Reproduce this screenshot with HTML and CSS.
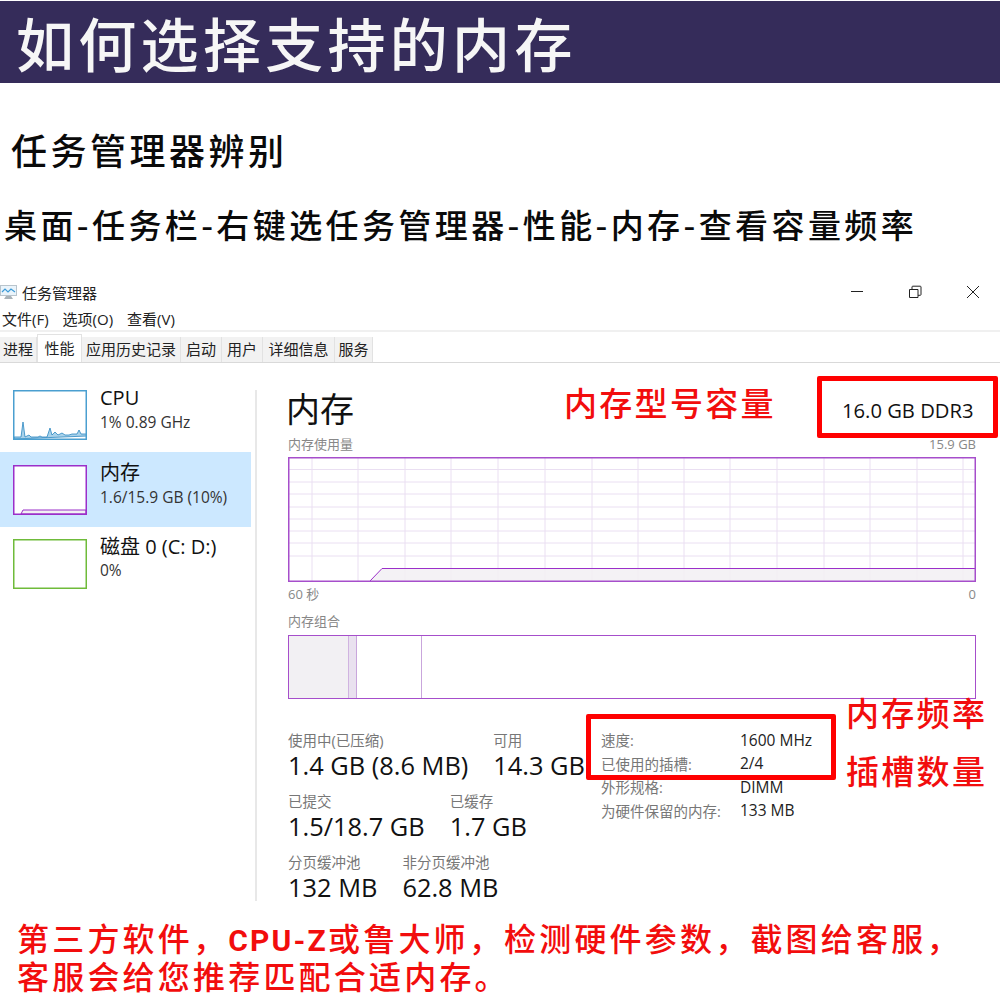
FILE: index.html
```html
<!DOCTYPE html>
<html lang="zh-CN">
<head>
<meta charset="utf-8">
<title>如何选择支持的内存</title>
<link rel="stylesheet" href="styles.css">
</head>
<body>
<div class="page">
  <h1 class="banner">如何选择支持的内存</h1>
  <h2 class="subhead">任务管理器辨别</h2>
  <p class="path">桌面-任务栏-右键选任务管理器-性能-内存-查看容量频率</p>

  <section class="win">
    <div class="titlebar">
      <svg class="appicon" width="18" height="18" viewBox="0 0 18 18"><rect x="0.5" y="2.5" width="16" height="10" fill="#eaf4fb" stroke="#b9c4cc"/><path d="M2 9l3-3 3 3 3-3 4 3" fill="none" stroke="#3d9bd8" stroke-width="1.2"/><path d="M6 13h5l2 3H4z" fill="#a9b2b8"/></svg>
      <span class="wintitle">任务管理器</span>
      <div class="controls">
        <svg width="14" height="14" viewBox="0 0 14 14"><path d="M1 6.5h12" stroke="#222" fill="none"/></svg>
        <svg width="14" height="14" viewBox="0 0 14 14"><path d="M1.5 4.5h8.500v8h-8.500z M4 4.500V2a.8.8 0 0 1 .8-.8h7.400a.8.800 0 0 1 .8.800v7.500a.8.800 0 0 1-.8.800H10" stroke="#222" fill="none"/></svg>
        <svg width="14" height="14" viewBox="0 0 14 14"><path d="M1 1l12 12M13 1L1 13" stroke="#222" fill="none"/></svg>
      </div>
    </div>
    <nav class="menu"><span>文件(F)</span><span>选项(O)</span><span>查看(V)</span></nav>
    <div class="tabs">
      <span class="tab t1">进程</span>
      <span class="tab active t2">性能</span>
      <span class="tab t3">应用历史记录</span>
      <span class="tab t4">启动</span>
      <span class="tab t4">用户</span>
      <span class="tab t5">详细信息</span>
      <span class="tab t6">服务</span>
    </div>
    <div class="body">
      <aside class="side">
        <div class="item first">
          <svg class="thumb" width="74" height="50" viewBox="0 0 74 50"><path d="M1 49V47h7l2-15 2 15 4-2 2 2h4l3 0 2-1 2 1h5l3-9 2 7 3-3 3 3 4-2 3 2h4l3-1h5l2-4 2 4h6v2z" fill="#a9d2ea" stroke="#2b86c0" stroke-width="0.8"/><rect x="0.750" y="0.750" width="72.500" height="48.500" fill="none" stroke="#4a9fd0" stroke-width="1.500"/></svg>
          <div class="itemtext"><div class="itemname">CPU</div><div class="itemsub">1% 0.89 GHz</div></div>
        </div>
        <div class="item selected">
          <svg class="thumb" width="74" height="50" viewBox="0 0 74 50"><rect width="74" height="50" fill="#fff"/><path d="M8 49l2-4h63v4z" fill="#f2f0f3" stroke="#9b2fc9"/><rect x="0.750" y="0.750" width="72.500" height="48.500" fill="none" stroke="#9b2fc9" stroke-width="1.500"/></svg>
          <div class="itemtext"><div class="itemname">内存</div><div class="itemsub">1.6/15.9 GB (10%)</div></div>
        </div>
        <div class="item disk">
          <svg class="thumb" width="74" height="50" viewBox="0 0 74 50"><rect x="0.750" y="0.750" width="72.500" height="48.500" fill="#fff" stroke="#6fbb3a" stroke-width="1.500"/></svg>
          <div class="itemtext"><div class="itemname">磁盘 0 (C: D:)</div><div class="itemsub">0%</div></div>
        </div>
      </aside>
      <main class="main">
        <div class="heading">内存</div>
        <div class="caprow usage"><span>内存使用量</span><span>15.9 GB</span></div>
        <svg class="graph" width="688" height="125" viewBox="0 0 688 125">
          <path d="M24 0V125M70 0V125M117 0V125M163 0V125M210 0V125M257 0V125M304 0V125M350 0V125M396 0V125M442 0V125M489 0V125M536 0V125M582 0V125M629 0V125M675 0V125M0 12.500H688M0 25H688M0 37H688M0 50H688M0 62H688M0 74H688M0 86H688M0 99H688" stroke="#eadff2" fill="none"/>
          <path d="M82 124L94 111.500H687V124z" fill="#f2f0f3" fill-opacity="0.85"/>
          <path d="M82 124L94 111.500H687" stroke="#9b2fc9" fill="none"/>
          <rect x="0.750" y="0.750" width="686.500" height="123.500" fill="none" stroke="#a64ecb" stroke-width="1.500"/>
        </svg>
        <div class="caprow axis"><span>60 秒</span><span>0</span></div>
        <div class="caprow combo">内存组合</div>
        <div class="bar"><i class="seg s1"></i><i class="seg s2"></i><i class="seg s3"></i></div>
        <div class="lower">
          <div class="stats">
            <div class="statrow">
              <div class="stat"><label>使用中(已压缩)</label><b>1.4 GB (8.6 MB)</b></div>
              <div class="stat"><label>可用</label><b>14.3 GB</b></div>
            </div>
            <div class="statrow">
              <div class="stat"><label>已提交</label><b>1.5/18.7 GB</b></div>
              <div class="stat"><label>已缓存</label><b>1.7 GB</b></div>
            </div>
            <div class="statrow">
              <div class="stat"><label>分页缓冲池</label><b>132 MB</b></div>
              <div class="stat"><label>非分页缓冲池</label><b>62.8 MB</b></div>
            </div>
          </div>
          <dl class="specs">
            <dt>速度:</dt><dd>1600 MHz</dd>
            <dt>已使用的插槽:</dt><dd>2/4</dd>
            <dt>外形规格:</dt><dd>DIMM</dd>
            <dt>为硬件保留的内存:</dt><dd>133 MB</dd>
          </dl>
        </div>
      </main>
    </div>
  </section>

  <p class="note">第三方软件，<span class="latin">CPU-Z</span>或鲁大师，检测硬件参数，截图给客服，<br>客服会给您推荐匹配合适内存。</p>

  <div class="redbox box-a"><span class="ddr">16.0 GB DDR3</span></div>
  <div class="redbox box-b"></div>
  <div class="mark mark-a">内存型号容量</div>
  <div class="mark mark-b">内存频率</div>
  <div class="mark mark-c">插槽数量</div>
</div>
</body>
</html>
```
FILE: styles.css
```css
* { box-sizing: border-box; }
html, body { margin: 0; padding: 0; background: #fff; }
.page {
  position: relative;
  width: 1000px;
  height: 1000px;
  overflow: hidden;
  font-family: "Open Sans", "Noto Sans CJK SC", sans-serif;
  color: #111;
}
.banner {
  margin: 1px 0 0;
  height: 82px;
  padding-left: 16px;
  background: #352c5a;
  color: #f6f6f6;
  font: 500 58px/82px "Noto Sans CJK SC", sans-serif;
  letter-spacing: 4.300px;
}
.subhead {
  margin: 43px 0 0 11px;
  height: 46px;
  font: 500 36px/46px "Noto Sans CJK SC", sans-serif;
  letter-spacing: 3.500px;
  color: #0a0a0a;
}
.path {
  margin: 30px 0 0 4px;
  height: 44px;
  font: 500 33px/44px "Noto Sans CJK SC", sans-serif;
  letter-spacing: 3.400px;
  color: #0a0a0a;
  white-space: nowrap;
}
.win { margin-top: 33px; }
.titlebar {
  display: flex;
  align-items: center;
  height: 26px;
}
.wintitle {
  margin-left: 4px;
  font-size: 15px;
  color: #222;
}
.controls {
  margin-left: auto;
  margin-right: 20px;
  display: flex;
  gap: 44px;
}
.menu {
  display: flex;
  align-items: center;
  gap: 14px;
  height: 26px;
  margin-top: 1px;
  padding-left: 2px;
  border-bottom: 2px solid #f0f0f0;
  font-size: 15px;
  color: #222;
}
.tabs {
  display: flex;
  align-items: flex-end;
  height: 31px;
  border-bottom: 1px solid #d9d9d9;
  font-size: 15px;
  color: #222;
}
.tab {
  display: block;
  height: 25px;
  line-height: 25px;
  text-align: center;
  background: #f2f2f2;
  border-right: 1px solid #e2e2e2;
}
.tab.active { height: 28px; line-height: 26px; background: #fff; border: 1px solid #e2e2e2; border-bottom: 0; }
.t1 { width: 37px; }
.t2 { width: 45px; }
.t3 { width: 99px; }
.t4 { width: 41px; }
.t5 { width: 72px; }
.t6 { width: 38px; }
.body { display: flex; height: 540px; }
.side {
  width: 257px;
  flex: none;
  height: 511px;
  margin-top: 27px;
  border-right: 2px solid #e8e8e8;
  padding-right: 4px;
}
.item {
  display: flex;
  gap: 13px;
  padding-left: 13px;
  align-items: flex-start;
}
.first { height: 62px; }
.selected { height: 75px; background: #cce8ff; padding-top: 13px; }
.disk { height: 75px; padding-top: 12px; }
.thumb { flex: none; }
.itemtext { margin-top: -5px; white-space: nowrap; }
.itemname { font-size: 20px; line-height: 25px; color: #111; }
.itemsub { font-size: 15.500px; line-height: 24px; color: #333; }
.disk .itemsub { line-height: 22px; }
.main { flex: 1; padding-left: 31px; padding-right: 24px; }
.heading {
  margin: 26px 0 0 -2px;
  height: 40px;
  font-size: 34px;
  line-height: 40px;
  color: #111;
}
.caprow {
  display: flex;
  justify-content: space-between;
  height: 18px;
  margin-top: 6px;
  font-size: 13px;
  line-height: 18px;
  color: #888;
}
.usage { margin-bottom: 4px; }
.graph { display: block; }
.axis { margin-top: 3px; }
.combo { margin-top: 9px; margin-bottom: 5px; }
.bar {
  display: flex;
  height: 64px;
  border: 1.500px solid #a64ecb;
}
.seg { display: block; }
.s1 { width: 59px; background: #f2f0f3; }
.s2 { width: 9px; background: #e9e1ef; border-left: 1px solid #d0b3e0; border-right: 1px solid #c9a6dc; }
.s3 { width: 65px; border-right: 1px solid #c9a6dc; }
.lower { display: flex; margin-top: 33px; }
.stats { width: 313px; flex: none; }
.statrow { display: flex; gap: 25px; white-space: nowrap; height: 61px; }
.stat label { display: block; font-size: 14.500px; line-height: 18px; color: #777; }
.stat b { display: block; font-weight: 400; font-size: 25.400px; line-height: 30px; color: #111; }
.specs {
  margin: -4px 0 0;
  display: grid;
  grid-template-columns: 139px auto;
  grid-auto-rows: 23.500px;
  align-items: center;
}
.specs dt { font-size: 14.500px; color: #777; white-space: nowrap; }
.specs dd { margin: 0; font-size: 15.500px; color: #222; white-space: nowrap; }
.note {
  position: absolute;
  left: 17px;
  top: 918px;
  margin: 0;
  font: 500 32px/38px "Noto Sans CJK SC", sans-serif;
  letter-spacing: 3.200px;
  color: #f20d0d;
  white-space: nowrap;
}
.latin { font-family: "Roboto", sans-serif; font-weight: 700; font-size: 30px; letter-spacing: 2.200px; line-height: 1; }
.redbox {
  position: absolute;
  border: 5px solid #ff0000;
  border-radius: 2px;
}
.box-a { left: 817px; top: 376px; width: 181px; height: 62px; }
.box-b { left: 586px; top: 714px; width: 250px; height: 66px; }
.ddr {
  display: block;
  margin: 16px 0 0 20px;
  font-size: 20.200px;
  line-height: 26px;
  color: #111;
  white-space: nowrap;
}
.mark {
  position: absolute;
  font: 500 33px/44px "Noto Sans CJK SC", sans-serif;
  letter-spacing: 2.300px;
  color: #f20d0d;
  white-space: nowrap;
}
.mark-a { left: 564px; top: 380px; }
.mark-b { left: 846px; top: 690px; }
.mark-c { left: 846px; top: 748px; }
```
